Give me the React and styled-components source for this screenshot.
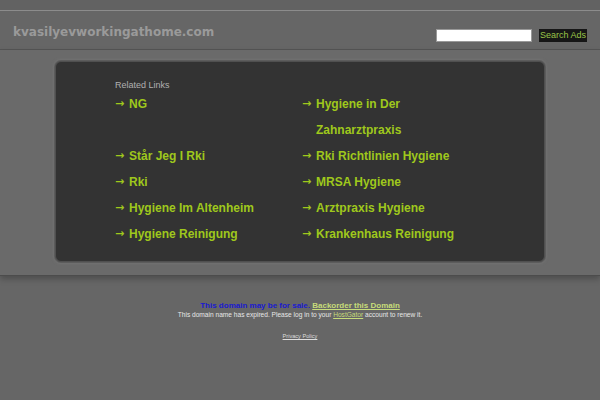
import React from "react";
import styled, { createGlobalStyle } from "styled-components";

const Global = createGlobalStyle`
  html, body { margin: 0; padding: 0; background: #666666; }
  body { font-family: "Liberation Sans", Arial, sans-serif; }
`;

const TopStrip = styled.div`
  height: 10px;
  background: #626262;
  border-bottom: 1px solid #8c8c8c;
`;

const Header = styled.header`
  height: 38px;
  display: flex;
  justify-content: space-between;
  align-items: flex-start;
  padding: 0 13px;
  background: #666666;
  border-bottom: 1px solid #555555;
`;

const Title = styled.h1`
  margin: 14px 0 0;
  font-family: "DejaVu Sans", Verdana, sans-serif;
  font-size: 12px;
  font-weight: bold;
  color: #9a9a9a;
`;

const SearchForm = styled.form`
  display: flex;
  align-items: center;
  gap: 7px;
  margin-top: 18px;
`;

const SearchInput = styled.input`
  box-sizing: border-box;
  width: 96px;
  height: 13px;
  border: 1px solid #999;
  background: #fff;
  padding: 0;
`;

const SearchButton = styled.button`
  box-sizing: border-box;
  height: 13px;
  width: 48px;
  border: none;
  background: #161616;
  color: #9ac448;
  font-family: "Liberation Sans", Arial, sans-serif;
  font-size: 9px;
  padding: 0;
  line-height: 13px;
`;

const Main = styled.main`
  background: #6a6a6a;
  padding: 11px 55px 13px;
  border-bottom: 1px solid #4c4c4c;
  box-shadow: 0 3px 6px rgba(0, 0, 0, 0.25);
  position: relative;
`;

const Panel = styled.section`
  box-sizing: border-box;
  height: 201px;
  background: #333333;
  border-radius: 6px;
  border: 1px solid #505050;
  box-shadow: 0 0 0 1px #5c5c5c, 0 0 3px 1px #7a7a7a;
  padding: 17px 0 0 59px;
`;

const Label = styled.div`
  font-size: 9px;
  line-height: 12px;
  color: #b0b0b0;
`;

const List = styled.ul`
  list-style: none;
  margin: 0;
  padding: 0;
  display: grid;
  grid-template-columns: 187px 187px;
`;

const Item = styled.li`
  display: flex;
  font-size: 12px;
  font-weight: bold;
  line-height: 26px;
  color: #9fc81c;
`;

const Arrow = styled.span`
  width: 14px;
  flex: none;
  font-family: "DejaVu Sans", sans-serif;
  font-size: 11px;
`;

const LinkText = styled.a`
  color: inherit;
  text-decoration: none;
  max-width: 150px;
`;

const Footer = styled.footer`
  text-align: center;
  padding-top: 25px;
`;

const SaleLine = styled.div`
  font-size: 8px;
  font-weight: bold;
  line-height: 10px;
  color: #1a1ad0;
`;

const Backorder = styled.a`
  color: #c6dc7a;
  text-decoration: underline;
`;

const Expired = styled.div`
  font-size: 6.6px;
  line-height: 8px;
  color: #e6e6e6;
`;

const Host = styled.a`
  color: #c6dc7a;
  text-decoration: underline;
`;

const Privacy = styled.a`
  display: inline-block;
  margin-top: 14px;
  font-size: 5.6px;
  color: #dddddd;
  text-decoration: underline;
`;

const links = [
  "NG",
  "Hygiene in Der Zahnarztpraxis",
  "Står Jeg I Rki",
  "Rki Richtlinien Hygiene",
  "Rki",
  "MRSA Hygiene",
  "Hygiene Im Altenheim",
  "Arztpraxis Hygiene",
  "Hygiene Reinigung",
  "Krankenhaus Reinigung",
];

export default function App() {
  return (
    <>
      <Global />
      <TopStrip />
      <Header>
        <Title>kvasilyevworkingathome.com</Title>
        <SearchForm onSubmit={(e) => e.preventDefault()}>
          <SearchInput type="text" />
          <SearchButton type="submit">Search Ads</SearchButton>
        </SearchForm>
      </Header>
      <Main>
        <Panel>
          <Label>Related Links</Label>
          <List>
            {links.map((l) => (
              <Item key={l}>
                <Arrow>→</Arrow>
                <LinkText href="#">{l}</LinkText>
              </Item>
            ))}
          </List>
        </Panel>
      </Main>
      <Footer>
        <SaleLine>
          This domain may be for sale. <Backorder href="#">Backorder this Domain</Backorder>
        </SaleLine>
        <Expired>
          This domain name has expired. Please log in to your <Host href="#">HostGator</Host> account to renew it.
        </Expired>
        <Privacy href="#">Privacy Policy</Privacy>
      </Footer>
    </>
  );
}
